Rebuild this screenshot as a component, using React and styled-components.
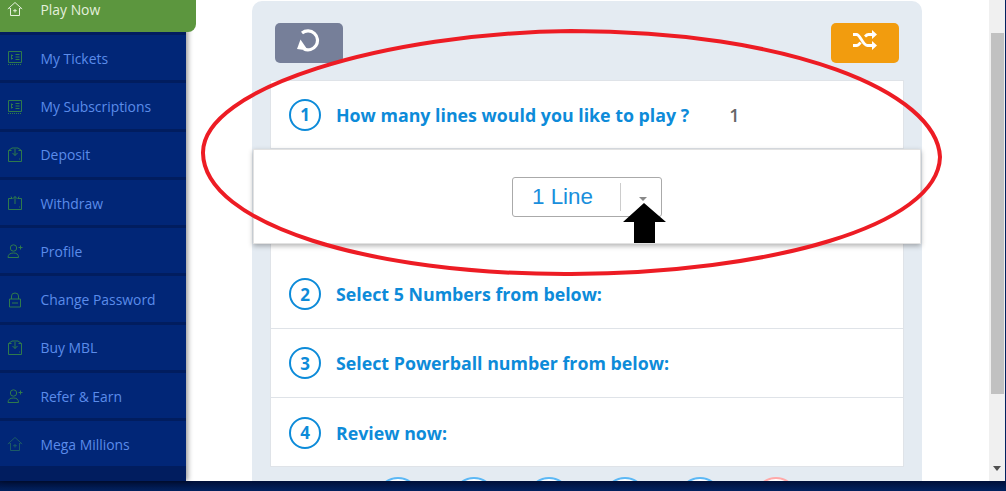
import styled, { createGlobalStyle } from "styled-components";

const GlobalStyle = createGlobalStyle`
	html, body {
		margin: 0;
		padding: 0;
		background: #ffffff;
		overflow: hidden;
	}
	* {
		box-sizing: border-box;
	}
`;

const Icon = ({ type }) => {
	if (type === "home") {
		return (
			<svg width="16" height="16" viewBox="0 0 16 16" fill="none" stroke="currentColor" strokeWidth="1">
				<path d="M.8 8 8 1.500 15.200 8M2.500 7.500l1 0M12.500 7.500h1M3.500 7v7.500h9V7M8 8v3.500M6.200 9.700h3.600" />
			</svg>
		);
	}
	if (type === "ticket") {
		return (
			<svg width="16" height="16" viewBox="0 0 16 16" fill="none" stroke="currentColor" strokeWidth="1">
				<path d="M1.500 1.500h13v11h-13z" />
				<path d="M1 14.500h14" strokeDasharray="1 1" />
				<path d="M8.500 4.500h4M8.500 7h4M8.500 9.500h4M4 5.500h2M4 8.500h2M4.500 4.500v5" />
			</svg>
		);
	}
	if (type === "deposit") {
		return (
			<svg width="16" height="16" viewBox="0 0 16 16" fill="none" stroke="currentColor" strokeWidth="1">
				<path d="M4.500 3.500h-3v11h13v-11h-3M1.500 3.500 5 1h6l3.500 2.500M8 2v6.500M5.500 6 8 8.500 10.500 6M12 12h.8" />
			</svg>
		);
	}
	if (type === "withdraw") {
		return (
			<svg width="16" height="16" viewBox="0 0 16 16" fill="none" stroke="currentColor" strokeWidth="1">
				<path d="M5 3.500H1.500v11h13v-11H11l1-2M4 1.500l1 2M8 9V1.500M5.500 4 8 1.500 10.500 4M12 12h.8" />
			</svg>
		);
	}
	if (type === "user") {
		return (
			<svg width="16" height="16" viewBox="0 0 16 16" fill="none" stroke="currentColor" strokeWidth="1">
				<circle cx="6.500" cy="5" r="3.200" />
				<path d="M1 14.500c0-3 2-4.500 5.500-4.500s5 1.500 5 4.500zM11.500 4.500h4M13.500 2.500v4" />
			</svg>
		);
	}
	return (
		<svg width="16" height="16" viewBox="0 0 16 16" fill="none" stroke="currentColor" strokeWidth="1">
			<path d="M4.500 7V4a3.500 3 0 0 1 7 0V7M2.500 7h11v8h-11zM5 11h6" />
		</svg>
	);
};

const menu = [
	{ label: "My Tickets", icon: "ticket" },
	{ label: "My Subscriptions", icon: "ticket" },
	{ label: "Deposit", icon: "deposit" },
	{ label: "Withdraw", icon: "withdraw" },
	{ label: "Profile", icon: "user" },
	{ label: "Change Password", icon: "lock" },
	{ label: "Buy MBL", icon: "deposit" },
	{ label: "Refer & Earn", icon: "user" },
	{ label: "Mega Millions", icon: "home", dim: true },
];

const balls = ["#5cb8f5", "#5cb8f5", "#5cb8f5", "#5cb8f5", "#5cb8f5", "#ffa9a9"];

const App = () => {
	return (
		<Page>
			<GlobalStyle />
			<Top>
				<Sidebar>
					<ActiveItem>
						<ItemIcon $color="#e4f0dc">
							<Icon type="home" />
						</ItemIcon>
						Play Now
					</ActiveItem>
					{menu.map((item) => (
						<MenuItem key={item.label}>
							<ItemIcon $color={item.dim ? "#1c5a66" : "#2f7a4c"}>
								<Icon type={item.icon} />
							</ItemIcon>
							{item.label}
						</MenuItem>
					))}
				</Sidebar>
				<Main>
					<Panel>
						<Toolbar>
							<ToolButton $color="#767f99">
								<svg width="26" height="23" viewBox="0 0 26 23" fill="none">
									<path d="M6 4A9.500 9.500 0 1 1 8 20" stroke="#fff" strokeWidth="3.200" />
									<path d="M1 20l11 1.500-7.500-11z" fill="#fff" />
								</svg>
							</ToolButton>
							<ToolButton $color="#f29c0e">
								<svg width="24" height="20" viewBox="0 0 24 20" fill="none">
									<path d="M0 4.500h3.500c4 0 6 11 11 11H19M0 15.500h3.500c1.500 0 3-1.500 4-3M12 6.500c1-1 2-2 3.500-2H19" stroke="#fff" strokeWidth="2.800" />
									<path d="M19 0l5 4.500-5 4.500zM19 11l5 4.500-5 4.500z" fill="#fff" />
								</svg>
							</ToolButton>
						</Toolbar>
						<Card>
							<FirstStep>
								<StepNumber>1</StepNumber>
								<StepTitle>How many lines would you like to play ?</StepTitle>
								<StepValue>1</StepValue>
							</FirstStep>
							<Dropdown>
								<Select>
									<SelectText>1 Line</SelectText>
									<SelectCaret />
								</Select>
							</Dropdown>
							<Step>
								<StepNumber>2</StepNumber>
								<StepTitle>Select 5 Numbers from below:</StepTitle>
							</Step>
							<Step>
								<StepNumber>3</StepNumber>
								<StepTitle>Select Powerball number from below:</StepTitle>
							</Step>
							<Step>
								<StepNumber>4</StepNumber>
								<StepTitle>Review now:</StepTitle>
							</Step>
						</Card>
						<Balls>
							{balls.map((color, i) => (
								<Ball key={i} $color={color} />
							))}
						</Balls>
					</Panel>
				</Main>
				<Scrollbar>
					<Thumb />
					<ScrollArrow />
				</Scrollbar>
				<EdgeLine />
				<Annotation width="1006" height="491" viewBox="0 0 1006 491" fill="none">
					<path
						d="M571 31C790 31 937 92 940 157C938 226 770 273 571 274C370 275 204 224 203 153C202 88 385 33 571 31Z"
						stroke="#ed1c24"
						strokeWidth="4"
					/>
					<path d="M644 203 666 222H655V243H634V222H623Z" fill="#000" />
				</Annotation>
			</Top>
			<Footer />
		</Page>
	);
};

export default App;

// Styled Components

const Page = styled.div`
	width: 1006px;
	height: 491px;
	display: flex;
	flex-direction: column;
	overflow: hidden;
	position: relative;
	font-family: "Open Sans", sans-serif;
`;

const Top = styled.div`
	height: 481px;
	display: flex;
	flex: none;
`;

const Footer = styled.div`
	height: 10px;
	flex: none;
	background: linear-gradient(#000f38, #01215f);
`;

const Sidebar = styled.div`
	width: 186px;
	flex: none;
	background: #011d5f;
	box-shadow: 2px 0 5px rgba(0, 0, 0, 0.4);
	position: relative;
	z-index: 1;
`;

const ActiveItem = styled.div`
	width: 196px;
	height: 32px;
	padding-bottom: 14px;
	margin-bottom: 3px;
	display: flex;
	align-items: center;
	background: #5c963e;
	border-bottom-right-radius: 8px;
	color: #e4f0dc;
	font-size: 13.900px;
	position: relative;
`;

const MenuItem = styled.div`
	height: 45.250px;
	margin-bottom: 3px;
	padding-top: 1.500px;
	display: flex;
	align-items: center;
	background: #012677;
	color: #5b8cea;
	font-size: 13.900px;
`;

const ItemIcon = styled.span`
	width: 40.500px;
	padding-left: 7px;
	flex: none;
	display: flex;
	align-items: center;
	color: ${(props) => props.$color};
`;

const Main = styled.div`
	flex: 1;
	padding: 1px 67px 0 66px;
	background: #ffffff;
	overflow: hidden;
`;

const Panel = styled.div`
	height: 500px;
	padding: 22px 18px 0 18px;
	background: #e4ebf2;
	border-radius: 10px 10px 0 0;
`;

const Toolbar = styled.div`
	display: flex;
	justify-content: space-between;
	padding: 0 5px;
	margin-bottom: 17px;
`;

const ToolButton = styled.div`
	width: 68px;
	height: 40px;
	padding-bottom: 6px;
	display: flex;
	align-items: center;
	justify-content: center;
	border-radius: 5px;
	background: ${(props) => props.$color};
`;

const Card = styled.div`
	height: 387px;
	background: #ffffff;
	border: 1px solid #dfe3e8;
`;

const Step = styled.div`
	height: 69px;
	padding-left: 18px;
	display: flex;
	align-items: center;
	border-bottom: 1px solid #dfe3e8;

	&:last-child {
		border-bottom: 0;
	}
`;

const FirstStep = styled(Step)`
	height: 68px;
`;

const StepNumber = styled.span`
	width: 32px;
	height: 32px;
	flex: none;
	display: flex;
	align-items: center;
	justify-content: center;
	border: 2px solid #0d8bd9;
	border-radius: 50%;
	color: #0d8bd9;
	font-size: 17px;
	font-weight: 700;
`;

const StepTitle = styled.span`
	margin-left: 15px;
	color: #0d8bd9;
	font-size: 17.800px;
	font-weight: 700;
`;

const StepValue = styled.span`
	margin-left: 40px;
	color: #666666;
	font-size: 18px;
	font-weight: 600;
`;

const Dropdown = styled.div`
	height: 95px;
	margin: 0 -18px 16px -18px;
	padding-top: 27px;
	display: flex;
	justify-content: center;
	background: #ffffff;
	border: 1px solid #e2e2e2;
	box-shadow: 0 2px 5px rgba(0, 0, 0, 0.3);
	position: relative;
`;

const Select = styled.div`
	width: 150px;
	height: 40px;
	display: flex;
	align-items: center;
	border: 1px solid #aaaaaa;
	border-radius: 3px;
	position: relative;
`;

const SelectText = styled.span`
	width: 108px;
	height: 28px;
	padding-right: 8px;
	display: flex;
	align-items: center;
	justify-content: center;
	border-right: 1px solid #cccccc;
	color: #1a8fdc;
	font-family: "Liberation Sans", Arial, sans-serif;
	font-size: 22.400px;
`;

const SelectCaret = styled.span`
	margin-left: 18px;
	margin-top: 3px;
	border-left: 4px solid transparent;
	border-right: 4px solid transparent;
	border-top: 4px solid #888888;
`;

const Balls = styled.div`
	display: flex;
	gap: 31.600px;
	padding: 10px 0 0 106px;
`;

const Ball = styled.span`
	width: 44px;
	height: 44px;
	flex: none;
	background: #ffffff;
	border: 2px solid ${(props) => props.$color};
	border-radius: 50%;
`;

const Scrollbar = styled.div`
	width: 16px;
	flex: none;
	padding: 33px 0 0 2px;
	background: #f0f0f0;
	display: flex;
	flex-direction: column;
	position: relative;
`;

const Thumb = styled.div`
	height: 361px;
	width: 13px;
	background: #c1c1c1;
`;

const ScrollArrow = styled.span`
	margin: 72px 0 0 2px;
	width: 0;
	border-left: 4px solid transparent;
	border-right: 4px solid transparent;
	border-top: 5px solid #505050;
`;

const EdgeLine = styled.div`
	width: 1px;
	flex: none;
	background: #01215f;
`;

const Annotation = styled.svg`
	position: absolute;
	left: 0;
	top: 0;
	z-index: 2;
	pointer-events: none;
`;
